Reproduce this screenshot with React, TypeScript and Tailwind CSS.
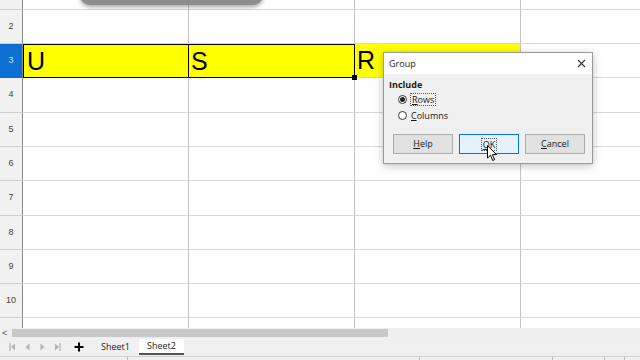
import React from 'react';

const rows = [
  { n: '', h: 10 },
  { n: '2', h: 34 },
  { n: '3', h: 34 },
  { n: '4', h: 35 },
  { n: '5', h: 34 },
  { n: '6', h: 34 },
  { n: '7', h: 35 },
  { n: '8', h: 34 },
  { n: '9', h: 34 },
  { n: '10', h: 34 },
  { n: '', h: 20 },
];

function Cursor() {
  return (
    <svg width="11" height="17" viewBox="0 0 11 17" className="absolute left-[487px] top-[145px]">
      <path d="M0.5 0.5 L0.5 13 L3.5 10.2 L5.7 15.5 L7.6 14.7 L5.4 9.6 L9.5 9.6 Z" fill="#fff" stroke="#000" strokeWidth="1" strokeLinejoin="round" />
    </svg>
  );
}

function Dialog() {
  return (
    <div className="absolute left-[383px] top-[52px] w-[210px] h-[112px] border border-[#9a9a9a] bg-[#f0f0f0] shadow-[0_2px_8px_rgba(0,0,0,0.25)] font-['Open_Sans',sans-serif] text-[#1a1a1a]">
      <div className="h-[21px] bg-white flex items-center justify-between pl-[5px] pr-[6px]">
        <span className="text-[9px]">Group</span>
        <svg width="9" height="9" viewBox="0 0 9 9">
          <path d="M1 1 L8 8 M8 1 L1 8" stroke="#333" strokeWidth="1.1" />
        </svg>
      </div>
      <div className="pl-[5px] pt-[4px]">
        <div className="text-[9px] font-bold leading-[14px]">Include</div>
        <div className="pl-[9px] flex flex-col gap-[3px] mt-[1px]">
          <div className="flex items-center gap-[3px] h-[13px]">
            <span className="w-[9px] h-[9px] rounded-full border border-[#333] bg-white flex items-center justify-center">
              <span className="w-[5px] h-[5px] rounded-full bg-[#222]" />
            </span>
            <span className="text-[9px] leading-[11px] px-[1px] border border-dotted border-[#555]"><span className="underline">R</span>ows</span>
          </div>
          <div className="flex items-center gap-[3px] h-[13px]">
            <span className="w-[9px] h-[9px] rounded-full border border-[#333] bg-white" />
            <span className="text-[9px] leading-[11px] px-[1px]"><span className="underline">C</span>olumns</span>
          </div>
        </div>
        <div className="flex gap-[6px] pl-[4px] mt-[12px]">
          <div className="w-[60px] h-[20px] border border-[#adadad] bg-[#e1e1e1] flex items-center justify-center text-[9px]">
            <span><span className="underline">H</span>elp</span>
          </div>
          <div className="w-[60px] h-[20px] border border-[#0078d7] bg-[#e5f1fb] flex items-center justify-center text-[9px]">
            <span className="border border-dotted border-[#555] px-[1px] leading-[11px]"><span className="underline">O</span>K</span>
          </div>
          <div className="w-[60px] h-[20px] border border-[#adadad] bg-[#e1e1e1] flex items-center justify-center text-[9px]">
            <span><span className="underline">C</span>ancel</span>
          </div>
        </div>
      </div>
    </div>
  );
}

export default function App() {
  return (
    <div className="relative w-[640px] h-[360px] overflow-hidden bg-white font-['Liberation_Sans',sans-serif]">
      <div className="h-[328px] overflow-hidden">
        {rows.map((r, i) => {
          const sel = r.n === '3';
          return (
            <div key={i} className="grid grid-cols-[23px_166px_166px_166px_1fr]" style={{ height: r.h }}>
              <div className={`flex items-center justify-center text-[9px] border-r border-r-[#8a8a8a] border-b ${sel ? 'bg-[#0b6fd3] text-[#cfe6ff] border-b-[#0b6fd3]' : 'bg-[#f1f1f1] text-[#444] border-b-[#cfcfcf]'}`}>
                {r.n}
              </div>
              {sel ? (
                <>
                  <div className="bg-[#ffff00] border border-black flex items-center pl-[3px] text-[25px] text-black leading-none">U</div>
                  <div className="bg-[#ffff00] border border-l-0 border-black flex items-center pl-[2px] text-[25px] text-black leading-none relative">
                    S
                    <span className="absolute right-[-3px] bottom-[-3px] w-[5px] h-[5px] bg-black" />
                  </div>
                  <div className="bg-[#ffff00] border-b border-r border-b-[#d0d0d0] border-r-[#c4c4c4] flex items-center pl-[2px] text-[25px] text-black leading-none">R</div>
                  <div className="border-b border-[#d8d8d8]" />
                </>
              ) : (
                <>
                  <div className="border-b border-r border-b-[#d8d8d8] border-r-[#c4c4c4]" />
                  <div className="border-b border-r border-b-[#d8d8d8] border-r-[#c4c4c4]" />
                  <div className="border-b border-r border-b-[#d8d8d8] border-r-[#c4c4c4]" />
                  <div className="border-b border-[#d8d8d8]" />
                </>
              )}
            </div>
          );
        })}
      </div>

      {/* horizontal scrollbar */}
      <div className="h-[10px] bg-[#efefef] flex items-center">
        <span className="w-[12px] text-[9px] text-[#555] leading-[10px] pl-[2px]">&lt;</span>
        <div className="w-[376px] h-[8px] bg-[#c8c8c8]" />
      </div>

      {/* sheet tabs */}
      <div className="h-[18px] bg-[#f0f0f0] flex items-center text-[9px] font-['Open_Sans',sans-serif]">
        <div className="flex items-center gap-[8px] pl-[9px] text-[#b4b4b4]">
          <svg width="7" height="8" viewBox="0 0 7 8"><path d="M1 0 V8" stroke="currentColor" strokeWidth="1.2" /><path d="M6 0.5 L2 4 L6 7.5 Z" fill="currentColor" /></svg>
          <svg width="7" height="8" viewBox="0 0 7 8"><path d="M5.5 0.5 L1.5 4 L5.5 7.5 Z" fill="currentColor" /></svg>
          <svg width="7" height="8" viewBox="0 0 7 8"><path d="M1.5 0.5 L5.5 4 L1.5 7.5 Z" fill="currentColor" /></svg>
          <svg width="7" height="8" viewBox="0 0 7 8"><path d="M1 0.5 L5 4 L1 7.5 Z" fill="currentColor" /><path d="M6 0 V8" stroke="currentColor" strokeWidth="1.2" /></svg>
        </div>
        <svg width="10" height="10" viewBox="0 0 10 10" className="ml-[13px]"><path d="M5 0.5 V9.5 M0.5 5 H9.5" stroke="#000" strokeWidth="2" /></svg>
        <span className="ml-[17px] text-[#222]">Sheet1</span>
        <div className="ml-[9px] h-[16px] w-[45px] bg-white border-b-2 border-[#555] flex items-center justify-center text-[#222] self-start mt-[1px]">Sheet2</div>
      </div>

      {/* status bar */}
      <div className="h-[4px] bg-[#f0f0f0] border-t border-[#cfcfcf] flex">
        <div className="w-[128px] border-r border-[#bbb]" />
        <div className="w-[292px] border-r border-[#bbb]" />
        <div className="w-[133px] border-r border-[#bbb]" />
        <div className="w-[52px] border-r border-[#bbb]" />
        <div className="w-[20px] border-r border-[#bbb]" />
      </div>

      {/* popup toolbar remnant at top */}
      <div className="absolute left-[80px] top-[-12px] w-[183px] h-[17px] rounded-b-[10px] bg-[#8d8d8d] shadow-[0_2px_4px_rgba(0,0,0,0.35)]" />

      <Dialog />
      <Cursor />
    </div>
  );
}
